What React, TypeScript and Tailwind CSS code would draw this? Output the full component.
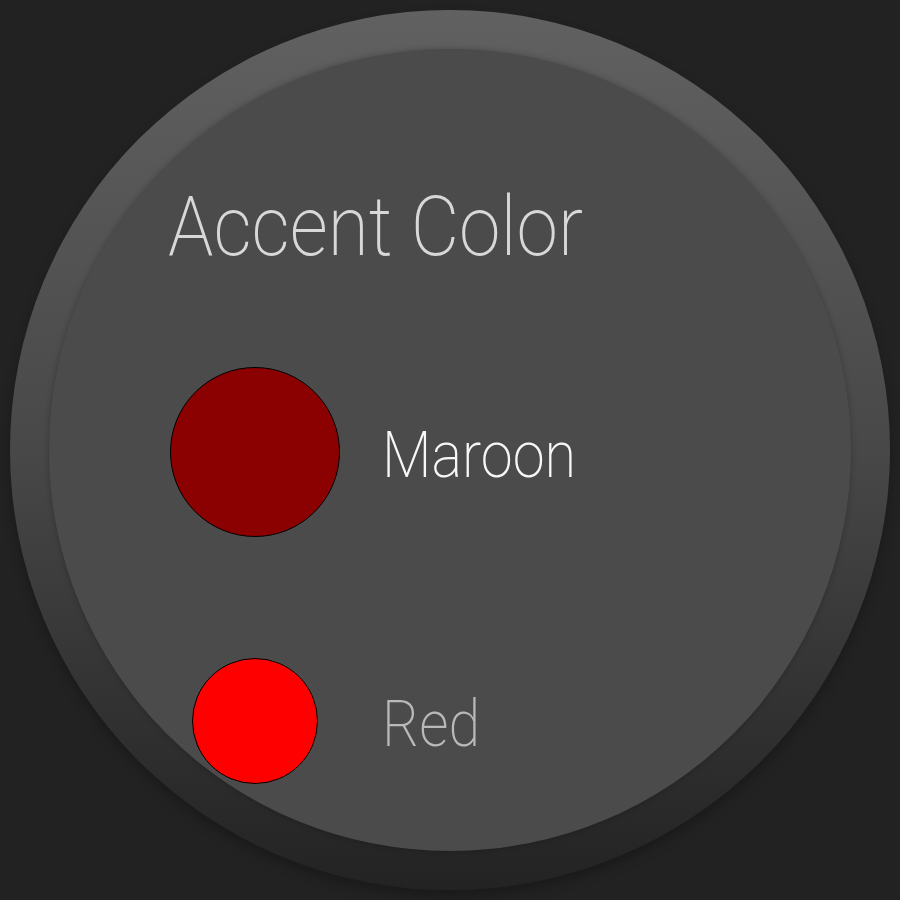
const options = [
  { name: 'Maroon', fill: 'bg-[#8b0000]', size: 'w-[170px] h-[170px]', text: 'text-[#f7f7f7]' },
  { name: 'Red', fill: 'bg-[#ff0000]', size: 'w-[126px] h-[126px]', text: 'text-[#b9b9b9]' },
];

export default function App() {
  return (
    <div
      className="w-[900px] h-[900px] bg-[#222222] flex items-center justify-center overflow-hidden"
      style={{ fontFamily: 'Roboto, "Noto Sans", sans-serif' }}
    >
      {/* Watch bezel */}
      <div className="w-[880px] h-[880px] rounded-full bg-gradient-to-b from-[#616161] via-[#484848] to-[#232323] flex items-center justify-center shadow-[0_6px_12px_rgba(0,0,0,0.25)]">
        {/* Screen */}
        <div className="w-[802px] h-[802px] rounded-full bg-[#4b4b4b] overflow-hidden flex flex-col pl-[119px] pt-[136px] shadow-[0_0_6px_rgba(0,0,0,0.25)]">
          <h1 className="text-[84px] leading-none font-extralight text-[#d8d8d8] mb-[48px] origin-left scale-x-[0.89] whitespace-nowrap">
            Accent Color
          </h1>
          {options.map((opt) => (
            <div key={opt.name} className="h-[269px] shrink-0 flex items-center">
              <div className="w-[174px] flex justify-center">
                <div className={`${opt.size} ${opt.fill} rounded-full border border-black`} />
              </div>
              <span className={`ml-[40px] mt-[8px] text-[65px] leading-none font-extralight origin-left scale-x-[0.885] ${opt.text}`}>
                {opt.name}
              </span>
            </div>
          ))}
        </div>
      </div>
    </div>
  );
}
